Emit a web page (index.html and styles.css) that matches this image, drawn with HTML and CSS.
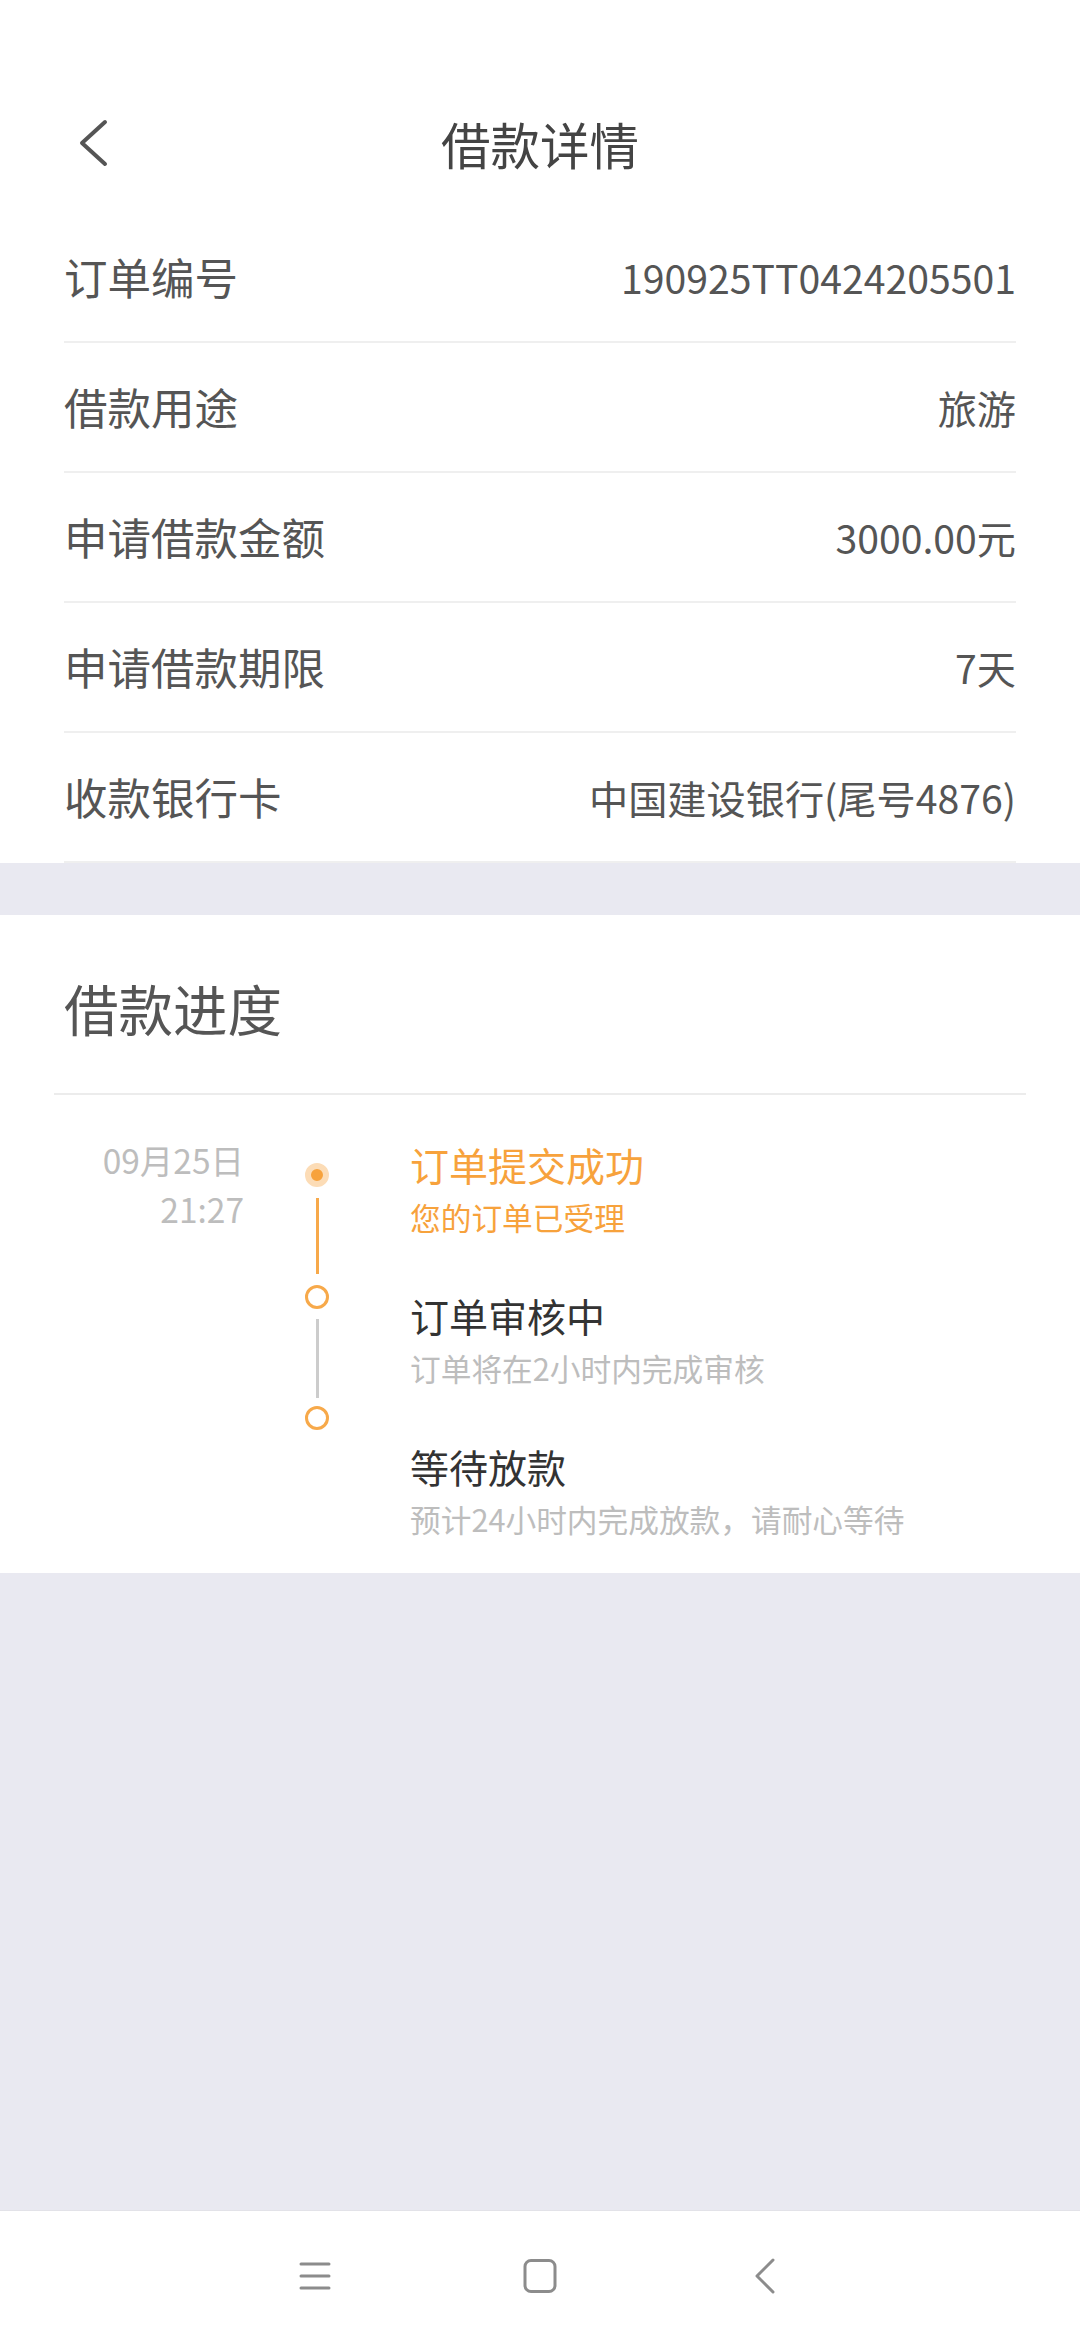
FILE: index.html
```html
<!DOCTYPE html>
<html lang="zh-CN">
<head>
<meta charset="utf-8">
<title>借款详情</title>
<link rel="stylesheet" href="styles.css">
</head>
<body>
<div class="screen">
  <section class="card top-card">
    <header class="appbar">
      <div class="appbar-left">
        <svg class="back" width="32" height="48" viewBox="0 0 32 48"><path d="M28 3 L5 24 L28 45" fill="none" stroke="#555" stroke-width="4" stroke-linecap="round" stroke-linejoin="round"/></svg>
      </div>
      <h1 class="appbar-title">借款详情</h1>
      <div class="appbar-right"></div>
    </header>
    <div class="rows">
      <div class="row"><span class="label">订单编号</span><span class="value">190925TT0424205501</span></div>
      <div class="row"><span class="label">借款用途</span><span class="value">旅游</span></div>
      <div class="row"><span class="label">申请借款金额</span><span class="value">3000.00元</span></div>
      <div class="row"><span class="label">申请借款期限</span><span class="value">7天</span></div>
      <div class="row"><span class="label">收款银行卡</span><span class="value">中国建设银行(尾号4876)</span></div>
    </div>
  </section>

  <section class="card progress-card">
    <div class="progress-head"><h2 class="progress-title">借款进度</h2></div>
    <div class="timeline">
      <div class="dates">
        <div class="date">09月25日</div>
        <div class="date">21:27</div>
      </div>
      <div class="axis">
        <span class="dot dot-active"></span>
        <span class="line line-done line-1"></span>
        <span class="dot dot-ring"></span>
        <span class="line line-todo line-2"></span>
        <span class="dot dot-ring dot-last"></span>
      </div>
      <div class="steps">
        <div class="step step-active">
          <div class="step-title">订单提交成功</div>
          <div class="step-sub">您的订单已受理</div>
        </div>
        <div class="step">
          <div class="step-title">订单审核中</div>
          <div class="step-sub">订单将在2小时内完成审核</div>
        </div>
        <div class="step">
          <div class="step-title">等待放款</div>
          <div class="step-sub">预计24小时内完成放款，请耐心等待</div>
        </div>
      </div>
    </div>
  </section>

  <div class="spacer"></div>

  <nav class="sysbar">
    <span class="sys-icon">
      <svg width="34" height="32" viewBox="0 0 34 32"><g stroke="#8c8c8c" stroke-width="3" stroke-linecap="round"><path d="M3 4 H31"/><path d="M3 16 H31"/><path d="M3 28 H31"/></g></svg>
    </span>
    <span class="sys-icon">
      <svg width="36" height="36" viewBox="0 0 36 36"><rect x="3" y="2.5" width="30" height="31" rx="6" fill="none" stroke="#8c8c8c" stroke-width="3"/></svg>
    </span>
    <span class="sys-icon">
      <svg width="24" height="36" viewBox="0 0 24 36"><path d="M20 2 L4 18 L20 34" fill="none" stroke="#8c8c8c" stroke-width="3" stroke-linecap="round" stroke-linejoin="round"/></svg>
    </span>
  </nav>
</div>
</body>
</html>
```

FILE: styles.css
```css
* { box-sizing: border-box; margin: 0; padding: 0; }

html, body {
  width: 1080px;
  height: 2340px;
  background: #e9e9f1;
  font-family: "Noto Sans CJK SC", "Noto Sans", sans-serif;
}

.screen {
  width: 1080px;
  height: 2340px;
  display: flex;
  flex-direction: column;
}

.card { background: #fff; }

.top-card { padding-top: 80px; }

.appbar {
  height: 133px;
  display: grid;
  grid-template-columns: 1fr auto 1fr;
  align-items: center;
}

.appbar-left { padding-left: 77px; display: flex; align-items: center; padding-bottom: 8px; }

.appbar-title {
  font-size: 49.5px;
  font-weight: 400;
  color: #444;
  line-height: 60px;
  padding-bottom: 6px;
}

.rows { padding: 0 64px; }

.row {
  height: 130px;
  border-bottom: 2px solid #efefef;
  display: flex;
  justify-content: space-between;
  align-items: center;
}

.label { font-size: 43.5px; color: #555; line-height: 56px; }
.value { font-size: 39.2px; color: #555; line-height: 56px; }

.progress-card { margin-top: 52px; }

.progress-head {
  height: 180px;
  margin: 0 54px;
  border-bottom: 2px solid #ececec;
  display: flex;
  align-items: center;
  padding-left: 10px;
  padding-top: 8px;
}

.progress-title { font-size: 54.5px; font-weight: 400; color: #555; line-height: 66px; }

.timeline {
  display: flex;
  padding-bottom: 34px;
}

.dates {
  width: 244px;
  padding-top: 40px;
  text-align: right;
}

.date { font-size: 33.5px; line-height: 49px; color: #bdbdbd; }

.axis {
  width: 146px;
  padding-top: 68px;
  display: flex;
  flex-direction: column;
  align-items: center;
}

.dot {
  width: 24px;
  height: 24px;
  border-radius: 50%;
  flex: none;
}

.dot-active {
  background: #f7a23c;
  border: 6px solid #fcdcb6;
}

.dot-ring {
  border: 3px solid #f7a94a;
  background: #fff;
}

.line { width: 3px; flex: none; margin: 11px 0; }
.line-1 { height: 76px; }
.line-2 { height: 79px; margin: 10px 0 8px; }
.line-done { background: #f7a94a; }
.line-todo { background: #cccccc; }

.steps {
  flex: 1;
  padding-left: 20px;
  padding-top: 44px;
  display: flex;
  flex-direction: column;
  gap: 53px;
}

.step-title { font-size: 39px; line-height: 50px; color: #333; }
.step-sub { font-size: 30.7px; line-height: 40px; color: #bdbdbd; margin-top: 8px; }

.step-active .step-title { color: #f7a23c; }
.step-active .step-sub { color: #f7a23c; }

.spacer { flex: 1; }

.sysbar {
  height: 130px;
  background: #fff;
  border-top: 1px solid #e2e2e8;
  display: flex;
  justify-content: center;
  align-items: center;
  gap: 185px;
}

.sys-icon {
  width: 40px;
  height: 40px;
  display: flex;
  align-items: center;
  justify-content: center;
}
```
